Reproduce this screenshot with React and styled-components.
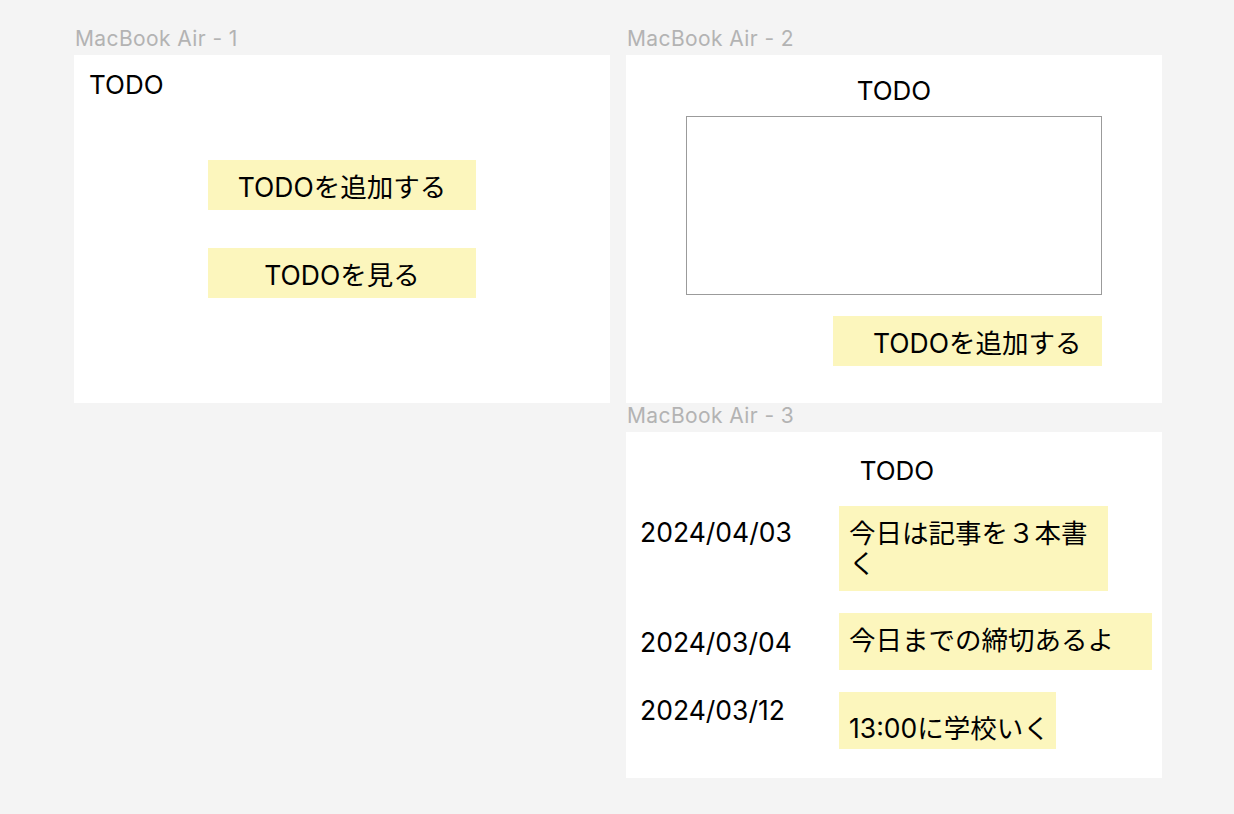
import React from "react";
import styled, { createGlobalStyle } from "styled-components";

const GlobalStyle = createGlobalStyle`
  html, body {
    margin: 0;
    background: #f4f4f4;
  }
  body {
    font-family: Inter, "Noto Sans CJK JP", sans-serif;
    color: #000;
  }
`;

const Canvas = styled.main`
  display: grid;
  grid-template-columns: 536px 536px;
  column-gap: 16px;
  align-items: start;
  padding: 26px 0 0 74px;
  min-height: 814px;
  box-sizing: border-box;
`;

const Column = styled.div`
  display: flex;
  flex-direction: column;
`;

const FrameLabel = styled.div`
  height: 29px;
  padding-left: 1px;
  font-family: Inter, sans-serif;
  font-size: 21px;
  letter-spacing: 0.4px;
  line-height: 26px;
  color: #b3b3b3;
  white-space: nowrap;
`;

const Frame = styled.section`
  display: flex;
  flex-direction: column;
  align-items: ${(p) => p.$align || "stretch"};
  height: ${(p) => p.$h}px;
  padding: ${(p) => p.$pad};
  box-sizing: border-box;
  background: #fff;
`;

const Title = styled.h1`
  margin: 0;
  padding-left: ${(p) => p.$shift || 0}px;
  font-size: 26px;
  font-weight: 400;
  line-height: 32px;
  text-align: ${(p) => p.$align || "left"};
`;

const ButtonStack = styled.div`
  display: flex;
  flex-direction: column;
  align-items: center;
  gap: 38px;
  margin-top: 59px;
`;

const YellowButton = styled.button`
  display: flex;
  align-items: center;
  justify-content: ${(p) => (p.$pl ? "flex-start" : "center")};
  width: ${(p) => p.$w}px;
  height: 50px;
  padding: 0 0 0 ${(p) => p.$pl || 0}px;
  border: 0;
  background: #fcf6bd;
  font-family: inherit;
  font-size: 26.5px;
  color: #000;
  cursor: pointer;
`;

const TodoInput = styled.textarea`
  display: block;
  width: 416px;
  height: 179px;
  margin-top: 9px;
  box-sizing: border-box;
  border: 1px solid #9b9b9b;
  resize: none;
  background: #fff;
  font-family: inherit;
  font-size: 20px;
  outline: none;
`;

const ActionRow = styled.div`
  display: flex;
  justify-content: flex-end;
  width: 416px;
  margin-top: 21px;
`;

const TodoList = styled.div`
  display: flex;
  flex-direction: column;
  gap: 22px;
  margin-top: 19px;
`;

const TodoRow = styled.div`
  display: grid;
  grid-template-columns: 199px auto;
  justify-content: start;
  align-items: start;
`;

const DateText = styled.span`
  display: block;
  margin-top: ${(p) => p.$mt}px;
  font-size: 26.5px;
  line-height: 32px;
`;

const Note = styled.div`
  width: ${(p) => p.$w}px;
  height: ${(p) => p.$h}px;
  padding: ${(p) => p.$pt}px 4px 0 10px;
  box-sizing: border-box;
  background: #fcf6bd;
  font-size: 26.5px;
  line-height: 30px;
`;

const todos = [
  { date: "2024/04/03", text: "今日は記事を３本書く", w: 269, h: 85, pt: 12, mt: 10 },
  { date: "2024/03/04", text: "今日までの締切あるよ", w: 313, h: 57, pt: 12, mt: 13 },
  { date: "2024/03/12", text: "13:00に学校いく", w: 217, h: 57, pt: 21, mt: 2 },
];

export default function App() {
  return (
    <>
      <GlobalStyle />
      <Canvas>
        <Column>
          <FrameLabel>MacBook Air - 1</FrameLabel>
          <Frame $h={348} $pad="14px 15px">
            <Title>TODO</Title>
            <ButtonStack>
              <YellowButton $w={268}>TODOを追加する</YellowButton>
              <YellowButton $w={268}>TODOを見る</YellowButton>
            </ButtonStack>
          </Frame>
        </Column>
        <Column>
          <FrameLabel>MacBook Air - 2</FrameLabel>
          <Frame $h={348} $pad="20px 0 0" $align="center">
            <Title $align="center">TODO</Title>
            <TodoInput aria-label="TODO" />
            <ActionRow>
              <YellowButton $w={269} $pl={40}>
                TODOを追加する
              </YellowButton>
            </ActionRow>
          </Frame>
          <FrameLabel>MacBook Air - 3</FrameLabel>
          <Frame $h={346} $pad="23px 14px 0">
            <Title $align="center" $shift={6}>
              TODO
            </Title>
            <TodoList>
              {todos.map((t) => (
                <TodoRow key={t.date}>
                  <DateText $mt={t.mt}>{t.date}</DateText>
                  <Note $w={t.w} $h={t.h} $pt={t.pt}>
                    {t.text}
                  </Note>
                </TodoRow>
              ))}
            </TodoList>
          </Frame>
        </Column>
      </Canvas>
    </>
  );
}
